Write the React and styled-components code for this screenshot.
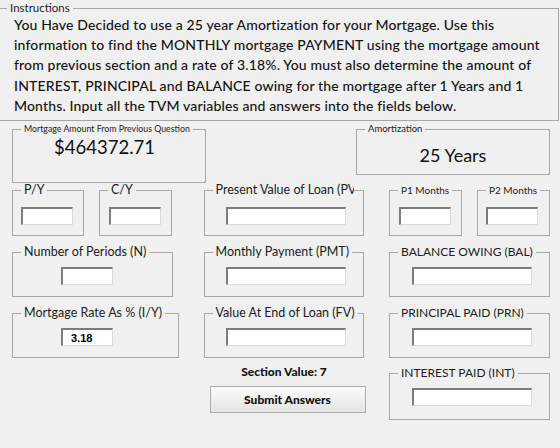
import React from 'react';
import styled, { createGlobalStyle } from 'styled-components';

const GlobalStyle = createGlobalStyle`
  html, body {
    margin: 0;
    background: #f0f0f0;
  }
  body {
    font-family: Lato, "Liberation Sans", sans-serif;
    color: #141414;
    overflow: hidden;
  }
`;

const Page = styled.div`
  width: 560px;
  height: 448px;
`;

const Instructions = styled.fieldset`
  margin: 1px 0 0 -2px;
  padding: 0;
  width: 561px;
  box-sizing: border-box;
  border: 1px solid #a6a6a6;
  min-width: 0;
`;

const InstructionText = styled.div`
  height: 105px;
  box-sizing: border-box;
  padding: 0 0 0 15px;
  font-size: 14px;
  letter-spacing: 0.15px;
  line-height: 20.2px;
  font-weight: 500;
  white-space: nowrap;
`;

const Main = styled.div`
  padding: 0 10px 0 12px;
`;

const TopRow = styled.div`
  display: flex;
  justify-content: space-between;
  align-items: flex-start;
  width: 538px;
  margin-top: 2px;
`;

const Columns = styled.div`
  display: grid;
  grid-template-columns: 167px 161px 161px;
  column-gap: 22px;
  justify-content: space-between;
  width: 538px;
`;

const Column = styled.div`
  display: flex;
  flex-direction: column;
  align-items: flex-start;
`;

const Pair = styled.div`
  display: flex;
  gap: 15px;
`;

const Panel = styled.fieldset`
  margin: ${p => p.$mt || 0}px 0 0 0;
  padding: 0;
  min-width: 0;
  box-sizing: border-box;
  width: ${p => p.$w}px;
  border: 1px solid #a6a6a6;
`;

// group caption sitting on the top border; $fs sets its size, $clip cuts a long one
const Legend = styled.legend`
  margin-left: 8px;
  padding: 0 3px;
  font-size: ${p => p.$fs || 12.5}px;
  line-height: ${p => p.$lh || 14}px;
  box-sizing: border-box;
  white-space: nowrap;
  overflow: hidden;
  max-width: ${p => (p.$clip ? `${p.$clip}px` : 'none')};
  color: #1c1c1c;
`;

const Slot = styled.div`
  display: flex;
  height: ${p => p.$h}px;
  box-sizing: border-box;
  padding-top: ${p => p.$pt}px;
  padding-left: ${p => p.$pl}px;
`;

const BigValue = styled.div`
  width: 100%;
  height: ${p => p.$h}px;
  display: flex;
  align-items: center;
  justify-content: center;
  padding-right: ${p => p.$pr || 0}px;
  box-sizing: border-box;
  font-size: ${p => p.$fs}px;
  color: #111;
`;

const Field = styled.input`
  width: ${p => p.$w}px;
  height: 18px;
  box-sizing: border-box;
  margin: 0;
  padding: 0 0 0 8px;
  background: #fff;
  border-top: 2px solid #7c7c7c;
  border-left: 2px solid #7c7c7c;
  border-right: 1px solid #dadada;
  border-bottom: 1px solid #dadada;
  font-family: "Liberation Sans", Arial, sans-serif;
  font-weight: 700;
  font-size: 11px;
  color: #000;
  outline: none;
`;

const SectionValue = styled.div`
  width: 100%;
  margin-top: 7px;
  text-align: center;
  font-size: 12px;
  line-height: 14px;
  font-weight: 900;
`;

const SubmitButton = styled.button`
  margin: 7px 0 0 6px;
  width: 156px;
  height: 27px;
  box-sizing: border-box;
  border: 1px solid #adadad;
  background: linear-gradient(#fbfbfb, #e4e4e4);
  font-family: Lato, "Liberation Sans", sans-serif;
  font-size: 12px;
  font-weight: 900;
  color: #111;
`;

// a titled group holding one entry box
const InputGroup = ({ title, w, h, pt, pl, fieldW = 120, value, mt, fs, clip }) => (
  <Panel $w={w} $mt={mt}>
    <Legend $fs={fs} $clip={clip}>{title}</Legend>
    <Slot $h={h} $pt={pt} $pl={pl}>
      <Field $w={fieldW} defaultValue={value} />
    </Slot>
  </Panel>
);

export default function App() {
  return (
    <Page>
      <GlobalStyle />
      <Instructions>
        <Legend $fs={11.5}>Instructions</Legend>
        <InstructionText>
          You Have Decided to use a 25 year Amortization for your Mortgage. Use this<br />
          information to find the MONTHLY mortgage PAYMENT using the mortgage amount<br />
          from previous section and a rate of 3.18%. You must also determine the amount of<br />
          INTEREST, PRINCIPAL and BALANCE owing for the mortgage after 1 Years and 1<br />
          Months. Input all the TVM variables and answers into the fields below.
        </InstructionText>
      </Instructions>

      <Main>
        <TopRow>
          <Panel $w={194}>
            <Legend $fs={8.8} $lh={12}>Mortgage Amount From Previous Question</Legend>
            <BigValue $h={24} $fs={18.5} $pr={9}>$464372.71</BigValue>
            <div style={{ height: 23 }} />
          </Panel>
          <Panel $w={194}>
            <Legend $fs={9.5} $lh={12}>Amortization</Legend>
            <BigValue $h={39} $fs={18} $pr={0}>25 Years</BigValue>
          </Panel>
        </TopRow>

        <Columns>
          <Column>
            <Pair>
              <InputGroup title="P/Y" w={72} h={38} pt={10} pl={8} fieldW={52} />
              <InputGroup title="C/Y" w={73} h={38} pt={10} pl={9} fieldW={52} />
            </Pair>
            <InputGroup title="Number of Periods (N)" w={161} h={37} pt={8} pl={48} fieldW={52} mt={9} />
            <InputGroup title="Mortgage Rate As % (I/Y)" w={167} h={37} pt={8} pl={48} fieldW={52} mt={9} value="3.18" />
          </Column>

          <Column>
            <InputGroup title="Present Value of Loan (PV)" w={160} h={38} pt={10} pl={21} clip={141} />
            <InputGroup title="Monthly Payment (PMT)" w={160} h={37} pt={8} pl={21} mt={9} />
            <InputGroup title="Value At End of Loan (FV)" w={160} h={37} pt={8} pl={21} mt={9} />
            <SectionValue>Section Value: 7</SectionValue>
            <SubmitButton type="button">Submit Answers</SubmitButton>
          </Column>

          <Column>
            <Pair>
              <InputGroup title="P1 Months" w={73} h={38} pt={10} pl={9} fieldW={52} fs={10} />
              <InputGroup title="P2 Months" w={73} h={38} pt={10} pl={8} fieldW={52} fs={10} />
            </Pair>
            <InputGroup title="BALANCE OWING (BAL)" w={161} h={37} pt={8} pl={22} mt={9} fs={12} />
            <InputGroup title="PRINCIPAL PAID  (PRN)" w={161} h={37} pt={8} pl={22} mt={9} fs={12} />
            <InputGroup title="INTEREST PAID  (INT)" w={161} h={39} pt={8} pl={22} mt={8} fs={12} />
          </Column>
        </Columns>
      </Main>
    </Page>
  );
}
